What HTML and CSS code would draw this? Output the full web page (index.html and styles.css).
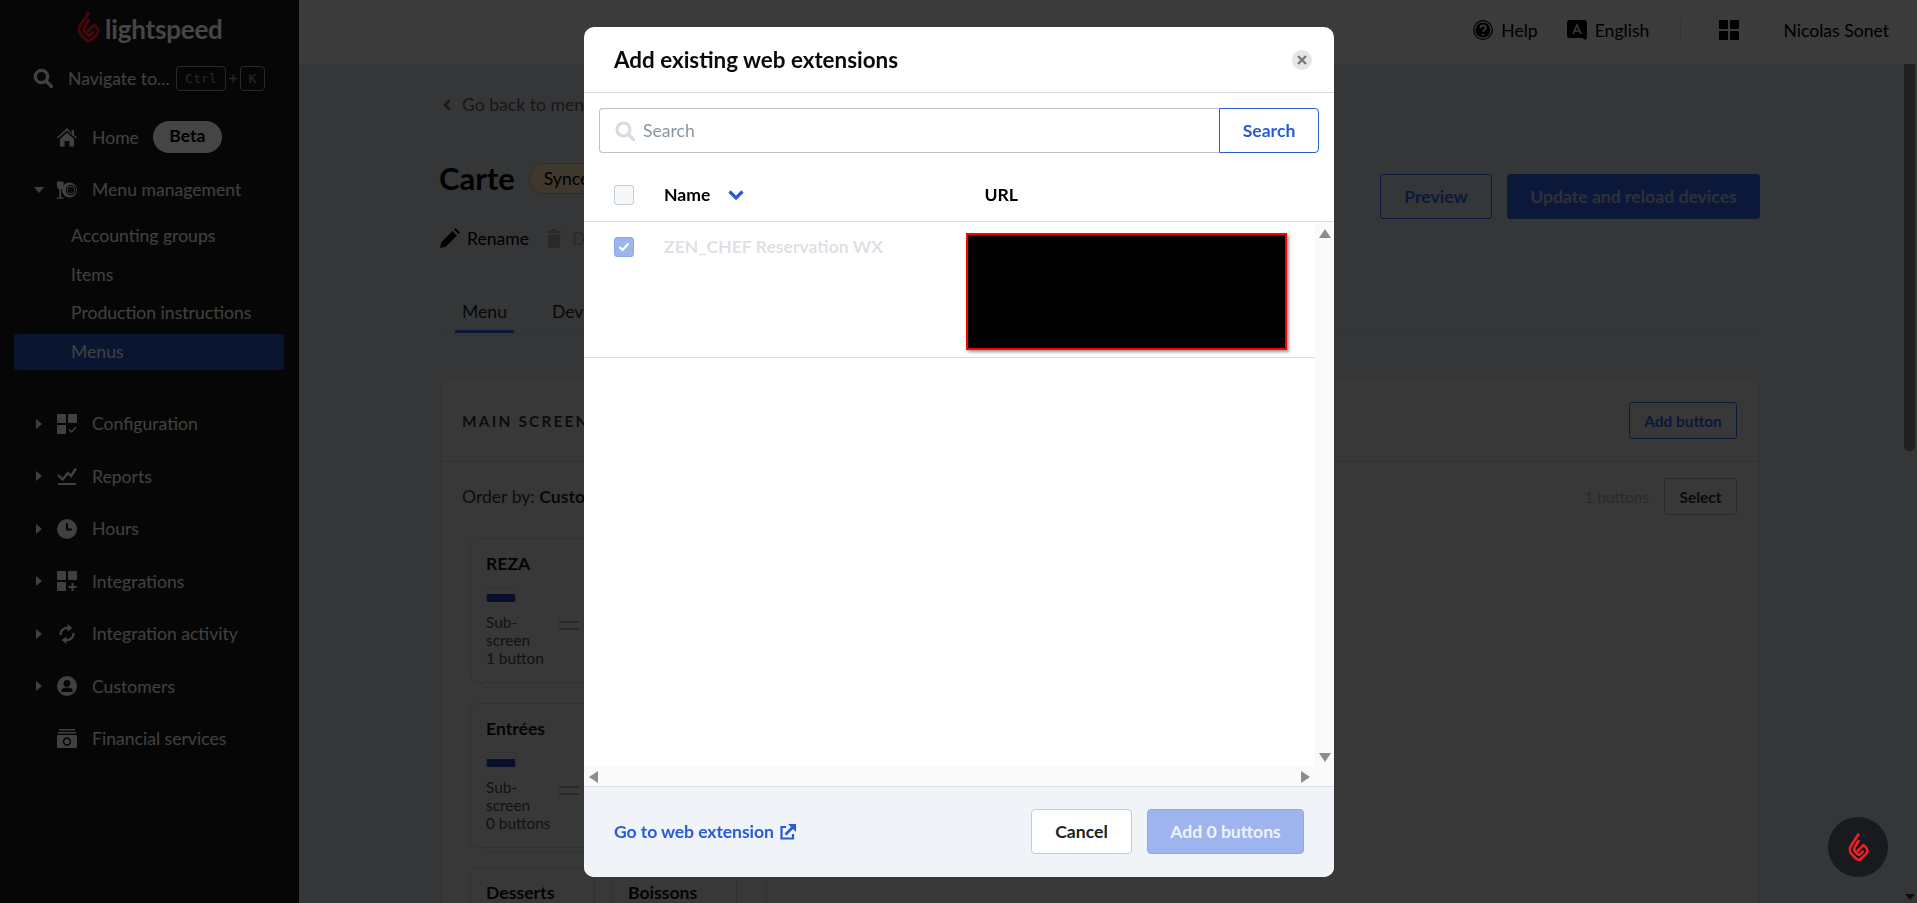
FILE: index.html
```html
<!DOCTYPE html>
<html lang="en">
<head>
    <meta charset="UTF-8">
    <title>Add existing web extensions</title>
    <link rel="stylesheet" href="styles.css">
</head>
<body>
    <svg class="defs" width="0" height="0">
        <symbol id="flame" viewBox="0 0 24 34">
            <path d="M12.500 1.500 L3.400 15.500 C1.200 19 2 23.400 5 26 L9.400 30.400 C11 32 13.400 32 15 30.400 L20.400 25.200 C22.800 22.800 22.600 19.600 20.200 17.200 L17.800 14.800 L10.400 22.200" fill="none" stroke="currentColor" stroke-width="3" stroke-linejoin="round"/>
            <path d="M12.600 9 L7.800 17 C6.600 19 7 21 8.400 22.600 L11.200 25.400 C12 26.200 12.800 26.200 13.600 25.400 L17.800 21.400" fill="none" stroke="currentColor" stroke-width="3" stroke-linejoin="round"/>
        </symbol>
    </svg>

    <div class="page">
        <aside class="sidebar">
            <div class="brand">
                <svg class="brand-mark"><use href="#flame"/></svg>
                <span class="brand-name">lightspeed</span>
            </div>
            <div class="navigate">
                <svg class="navigate-icon" viewBox="0 0 20 20"><circle cx="8.500" cy="8.500" r="6.200" fill="none" stroke="currentColor" stroke-width="3.200"/><path d="M13 13l5.500 5.500" stroke="currentColor" stroke-width="3.400" stroke-linecap="round"/></svg>
                <span class="navigate-label">Navigate to...</span>
                <kbd class="key key-ctrl">Ctrl</kbd>
                <span class="key-plus">+</span>
                <kbd class="key key-k">K</kbd>
            </div>

            <div class="nav-row">
                <span class="caret"></span>
                <svg class="nav-icon" viewBox="0 0 20 20"><path d="M10 1L0 10.500l1 1L10 3.400l9 8.100 1-1-3-2.800V3h-2.400v3.400z" fill="currentColor"/><path d="M3 12l7-6.400 7 6.400v7.500h-4.600V14H7.600v5.500H3z" fill="currentColor"/></svg>
                <span>Home</span>
                <span class="beta">Beta</span>
            </div>
            <div class="nav-row">
                <span class="caret caret-open"></span>
                <svg class="nav-icon" viewBox="0 0 20 20"><circle cx="12.500" cy="10" r="7.500" fill="currentColor"/><circle cx="14" cy="10" r="5.200" fill="#161616"/><circle cx="14" cy="10" r="3.700" fill="none" stroke="currentColor" stroke-width="0.900"/><path d="M0 1.500h6.500v5C6.500 8 5.200 9.200 4.100 9.400v8h2.400v1.300H0v-1.300h2.400v-8C1.300 9.200 0 8 0 6.500z" fill="currentColor"/></svg>
                <span>Menu management</span>
            </div>
            <a class="sub-row">Accounting groups</a>
            <a class="sub-row">Items</a>
            <a class="sub-row">Production instructions</a>
            <a class="sub-row sub-row-active">Menus</a>

            <div class="nav-group">
                <div class="nav-row">
                    <span class="caret caret-closed"></span>
                    <svg class="nav-icon" viewBox="0 0 20 20"><rect width="9" height="9" rx="1" fill="currentColor"/><rect x="11" width="9" height="9" rx="1" fill="currentColor"/><rect y="11" width="9" height="9" rx="1" fill="currentColor"/><path d="M12 15.500l2.400 2.400 4.600-5" fill="none" stroke="currentColor" stroke-width="1.500"/></svg>
                    <span>Configuration</span>
                </div>
                <div class="nav-row">
                    <span class="caret caret-closed"></span>
                    <svg class="nav-icon" viewBox="0 0 20 20"><path d="M1 9l4.500 4.500L11 7l3 3 5-7.500" fill="none" stroke="currentColor" stroke-width="2.400"/><rect x="1" y="17" width="18" height="2" fill="currentColor"/></svg>
                    <span>Reports</span>
                </div>
                <div class="nav-row">
                    <span class="caret caret-closed"></span>
                    <svg class="nav-icon" viewBox="0 0 20 20"><circle cx="10" cy="10" r="10" fill="currentColor"/><path d="M10 4v6.500h5" fill="none" stroke="#161616" stroke-width="2"/></svg>
                    <span>Hours</span>
                </div>
                <div class="nav-row">
                    <span class="caret caret-closed"></span>
                    <svg class="nav-icon" viewBox="0 0 20 20"><rect width="9" height="9" rx="1" fill="currentColor"/><rect x="11" width="9" height="9" rx="1" fill="currentColor"/><rect y="11" width="9" height="9" rx="1" fill="currentColor"/><path d="M15.500 12v8M11.500 16h8" stroke="currentColor" stroke-width="2"/></svg>
                    <span>Integrations</span>
                </div>
                <div class="nav-row">
                    <span class="caret caret-closed"></span>
                    <svg class="nav-icon" viewBox="0 0 20 20"><path d="M3.500 11A6.500 6.500 0 0 1 12 4.300" fill="none" stroke="currentColor" stroke-width="2.200"/><path d="M10.500 0l5 4-5 3.500z" fill="currentColor"/><path d="M16.500 9A6.500 6.500 0 0 1 8 15.700" fill="none" stroke="currentColor" stroke-width="2.200"/><path d="M9.500 20l-5-4 5-3.500z" fill="currentColor"/></svg>
                    <span>Integration activity</span>
                </div>
                <div class="nav-row">
                    <span class="caret caret-closed"></span>
                    <svg class="nav-icon" viewBox="0 0 20 20"><circle cx="10" cy="10" r="10" fill="currentColor"/><circle cx="10" cy="7.500" r="3.400" fill="#161616"/><path d="M4.500 16v-1.500c0-2 2-3 5.500-3s5.500 1 5.500 3V16z" fill="#161616"/></svg>
                    <span>Customers</span>
                </div>
                <div class="nav-row">
                    <span class="caret"></span>
                    <svg class="nav-icon" viewBox="0 0 20 20"><rect x="2" y="0" width="16" height="1.500" fill="currentColor"/><rect x="1" y="3" width="18" height="1.500" fill="currentColor"/><path d="M1 6h18a1 1 0 0 1 1 1v11a1 1 0 0 1-1 1H1a1 1 0 0 1-1-1V7a1 1 0 0 1 1-1z" fill="currentColor"/><circle cx="10" cy="12.500" r="3.400" fill="none" stroke="#161616" stroke-width="1.600"/></svg>
                    <span>Financial services</span>
                </div>
            </div>
        </aside>

        <div class="main">
            <header class="topbar">
                <div class="top-item">
                    <svg class="top-icon" viewBox="0 0 20 20"><circle cx="10" cy="10" r="9.300" fill="none" stroke="currentColor" stroke-width="1.200"/><circle cx="10" cy="10" r="7.600" fill="currentColor"/><path d="M7.400 8c0-3.400 5.200-3.400 5.200 0 0 2-2.600 2-2.600 3.800" fill="none" stroke="#d8d8d8" stroke-width="1.700"/><circle cx="10" cy="14.500" r="1.100" fill="#d8d8d8"/></svg>
                    <span>Help</span>
                </div>
                <div class="top-item top-item-lang">
                    <svg class="top-icon" viewBox="0 0 20 20"><path d="M3 0h14a3 3 0 0 1 3 3v15l-1.500 2-3.500-2H3a3 3 0 0 1-3-3V3a3 3 0 0 1 3-3z" fill="currentColor"/><path d="M6 14l4-9 4 9M7.400 11h5.200" fill="none" stroke="#d8d8d8" stroke-width="1.600"/></svg>
                    <span>English</span>
                </div>
                <span class="top-sep"></span>
                <svg class="top-icon top-grid" viewBox="0 0 20 20"><rect width="9" height="9" rx="1" fill="currentColor"/><rect x="11" width="9" height="9" rx="1" fill="currentColor"/><rect y="11" width="9" height="9" rx="1" fill="currentColor"/><rect x="11" y="11" width="9" height="9" rx="1" fill="currentColor"/></svg>
                <span class="top-user">Nicolas Sonet</span>
            </header>

            <div class="content-wrap">
                <div class="content">
                    <div class="back">
                        <svg class="back-icon" viewBox="0 0 8 12"><path d="M6.500 1.500L2 6l4.500 4.500" fill="none" stroke="currentColor" stroke-width="2.600"/></svg>
                        <span>Go back to menus</span>
                    </div>

                    <div class="title-row">
                        <div>
                            <div class="title-line">
                                <h1 class="title">Carte</h1>
                                <span class="sync">Synced</span>
                            </div>
                            <div class="actions">
                                <svg class="action-icon" viewBox="0 0 20 20"><path d="M0 20l1.500-6L12.500 3l4.500 4.500L6 18.500zM14 1.500L15.500 0 20 4.500 18.500 6z" fill="currentColor"/></svg>
                                <span class="action-label">Rename</span>
                                <svg class="action-icon action-icon-off" viewBox="0 0 14 20"><path d="M0 3h4.500V1h5v2H14v2H0zM1 6.500h12V20H1z" fill="currentColor"/></svg>
                                <span class="action-off">Delete</span>
                            </div>
                        </div>
                        <div class="title-buttons">
                            <button class="btn btn-outline btn-preview">Preview</button>
                            <button class="btn btn-primary">Update and reload devices</button>
                        </div>
                    </div>

                    <div class="tabs">
                        <span class="tab tab-active">Menu</span>
                        <span class="tab">Devices</span>
                    </div>

                    <section class="card">
                        <div class="card-head">
                            <span class="card-title">MAIN SCREEN</span>
                            <button class="btn-small btn-small-blue">Add button</button>
                        </div>
                        <div class="card-tools">
                            <span class="order">Order by: <b>Custom</b></span>
                            <span class="count">1 buttons</span>
                            <button class="btn-small btn-select">Select</button>
                        </div>
                        <div class="tiles">
                            <div class="tile tile-stack">
                                <div class="tile-name">REZA</div>
                                <div class="tile-swatch"></div>
                                <div class="tile-foot">
                                    <div class="tile-meta">Sub-<br>screen<br>1 button</div>
                                    <div class="tile-handle"></div>
                                </div>
                            </div>
                            <div class="tile-blank"></div>
                            <div class="tile tile-stack">
                                <div class="tile-name">Entrées</div>
                                <div class="tile-swatch"></div>
                                <div class="tile-foot">
                                    <div class="tile-meta">Sub-<br>screen<br>0 buttons</div>
                                    <div class="tile-handle"></div>
                                </div>
                            </div>
                            <div class="tile-blank"></div>
                            <div class="tile"><div class="tile-name">Desserts</div></div>
                            <div class="tile"><div class="tile-name">Boissons</div></div>
                            <div class="tile-last"></div>
                        </div>
                    </section>
                </div>
                <div class="page-scroll">
                    <div class="page-thumb"></div>
                    <span class="page-arrow"></span>
                </div>
            </div>
        </div>
    </div>

    <button class="chat">
        <svg class="chat-mark"><use href="#flame"/></svg>
    </button>

    <!-- dimmed layer + dialog -->
    <div class="overlay">
        <div class="modal">
            <div class="modal-head">
                <h2 class="modal-title">Add existing web extensions</h2>
                <span class="modal-close">
                    <svg viewBox="0 0 10 10" width="10" height="10"><path d="M1 1l8 8M9 1l-8 8" stroke="currentColor" stroke-width="2.400"/></svg>
                </span>
            </div>

            <div class="search">
                <div class="search-input">
                    <svg class="search-icon" viewBox="0 0 20 20"><circle cx="8.500" cy="8.500" r="6.500" fill="none" stroke="currentColor" stroke-width="3"/><path d="M13 13l5.500 5.500" stroke="currentColor" stroke-width="3.200" stroke-linecap="round"/></svg>
                    <span>Search</span>
                </div>
                <button class="search-btn">Search</button>
            </div>

            <div class="list-head">
                <span class="check"></span>
                <span class="col-name">Name</span>
                <svg class="sort" viewBox="0 0 16 10"><path d="M1.500 1.500L8 8l6.500-6.500" fill="none" stroke="currentColor" stroke-width="3.200"/></svg>
                <span class="col-url">URL</span>
            </div>

            <div class="list">
                <div class="list-scroll">
                    <div class="list-body">
                        <div class="list-row">
                            <span class="check check-on">
                                <svg viewBox="0 0 12 10" width="12" height="10"><path d="M1.500 5l3 3 6-6.500" fill="none" stroke="#fff" stroke-width="2.200"/></svg>
                            </span>
                            <span class="row-name">ZEN_CHEF Reservation WX</span>
                            <div class="redacted"></div>
                        </div>
                    </div>
                    <div class="vbar">
                        <span class="arrow arrow-up"></span>
                        <span class="arrow arrow-down"></span>
                    </div>
                </div>
                <div class="hbar">
                    <span class="arrow arrow-left"></span>
                    <span class="arrow arrow-right"></span>
                </div>
            </div>

            <div class="modal-foot">
                <a class="foot-link">Go to web extension
                    <svg class="foot-link-icon" viewBox="0 0 16 16"><path d="M6 3H1.500v11.500H13V10" fill="none" stroke="currentColor" stroke-width="2.200"/><path d="M5.500 10.500L12.500 3.500" stroke="currentColor" stroke-width="2.600"/><path d="M8 0h8v8z" fill="currentColor"/></svg>
                </a>
                <button class="btn-cancel">Cancel</button>
                <button class="btn-add">Add 0 buttons</button>
            </div>
        </div>
    </div>
</body>
</html>
```
FILE: styles.css
```css
*{
    box-sizing: border-box;
}
html, body{
    margin: 0;
    height: 100%;
    overflow: hidden;
}
body{
    font-family: "Lato", "Liberation Sans", sans-serif;
    font-size: 17.6px;
    color: #000;
}
button{
    font-family: inherit;
}
.defs{
    display: block;
    height: 0;
}

.page{
    display: flex;
    height: 903px;
}

/* sidebar */
.sidebar{
    width: 299px;
    flex-shrink: 0;
    background-color: #161616;
    color: #ececec;
}
.brand{
    height: 64px;
    display: flex;
    justify-content: flex-start;
    padding: 10px 0 0 77px;
}
.brand-mark{
    width: 23px;
    height: 34px;
    color: #ff2020;
}
.brand-name{
    margin-left: 5px;
    font-size: 26px;
    font-weight: 700;
    line-height: 38px;
    letter-spacing: -0.2px;
    color: #fff;
}
.navigate{
    height: 28px;
    display: flex;
    align-items: center;
    padding-left: 33px;
    margin-bottom: 19px;
}
.navigate-icon{
    width: 20px;
    height: 20px;
}
.navigate-label{
    margin-left: 15px;
    width: 108px;
}
.key{
    height: 25px;
    border: 1px solid #999;
    border-radius: 4px;
    font-family: "DejaVu Sans Mono", monospace;
    font-size: 13px;
    line-height: 23px;
    text-align: center;
    color: #999;
}
.key-ctrl{
    width: 50px;
}
.key-k{
    width: 25px;
}
.key-plus{
    width: 14px;
    text-align: center;
    color: #999;
}
.nav-row{
    height: 52.5px;
    display: flex;
    align-items: center;
    padding-left: 34px;
}
.caret{
    width: 10px;
    margin-right: 13px;
}
.caret-open{
    height: 0;
    border-left: 5px solid transparent;
    border-right: 5px solid transparent;
    border-top: 6px solid currentColor;
}
.caret-closed{
    width: 6px;
    height: 10px;
    margin-left: 2px;
    margin-right: 15px;
    border-top: 5px solid transparent;
    border-bottom: 5px solid transparent;
    border-left: 6px solid currentColor;
}
.nav-icon{
    width: 20px;
    height: 20px;
    margin-right: 15px;
    flex-shrink: 0;
}
.beta{
    margin-left: 14px;
    width: 69px;
    height: 32px;
    border-radius: 16px;
    background-color: #fff;
    color: #000;
    font-weight: 700;
    line-height: 30px;
    text-align: center;
}
.sub-row{
    display: block;
    height: 36px;
    margin: 2.4px 15px 0 14px;
    padding-left: 57px;
    line-height: 36px;
    border-radius: 3px;
}
.sub-row-active{
    background-color: #274fb4;
}
.nav-group{
    margin-top: 28px;
}

/* top bar */
.main{
    flex: 1;
    min-width: 0;
    display: flex;
    flex-direction: column;
    background-color: #c3c9cd;
}
.topbar{
    height: 64px;
    flex-shrink: 0;
    display: flex;
    align-items: center;
    justify-content: flex-end;
    padding: 0 28px 4px 0;
    background-color: #d8d8d8;
}
.top-item{
    display: flex;
    align-items: center;
    gap: 8px;
}
.top-item-lang{
    margin-left: 29px;
}
.top-icon{
    width: 20px;
    height: 20px;
}
.top-sep{
    width: 1px;
    height: 20px;
    margin: 0 38px 0 31px;
    background-color: #bdbdbd;
}
.top-user{
    margin-left: 44px;
}

/* page content */
.content-wrap{
    flex: 1;
    min-height: 0;
    display: flex;
    overflow: hidden;
}
.content{
    flex: 1;
    min-width: 0;
    padding: 28px 144px 0 141px;
}
.back{
    display: flex;
    align-items: center;
    height: 25px;
    margin-bottom: 1px;
    color: #555;
}
.back-icon{
    width: 8px;
    height: 12px;
    margin: 0 11px 0 3px;
}
.title-row{
    display: flex;
    justify-content: space-between;
    margin-top: 43px;
}
.title-line{
    display: flex;
    align-items: center;
    height: 36px;
}
.title{
    margin: 0 0 0 -1px;
    font-size: 31px;
    font-weight: 700;
}
.sync{
    margin-left: 14px;
    padding: 0 14px;
    height: 31px;
    border: 1px solid #c9a063;
    border-radius: 16px;
    background-color: #e8cfa6;
    line-height: 29px;
}
.actions{
    display: flex;
    align-items: center;
    height: 22px;
    margin-top: 31px;
}
.action-icon{
    width: 20px;
    height: 20px;
    margin-right: 7px;
}
.action-icon-off{
    width: 14px;
    margin: 0 11px 0 18px;
    color: #999;
}
.action-off{
    color: #999;
}
.title-buttons{
    display: flex;
    gap: 15px;
    margin-top: 14px;
}
.btn{
    height: 45px;
    border-radius: 3px;
    font-size: 17.6px;
    font-weight: 700;
}
.btn-outline{
    width: 112px;
    background-color: transparent;
    border: 1px solid #2a5bd7;
    color: #2a5bd7;
}
.btn-primary{
    width: 253px;
    background-color: #2a5bd7;
    border: 1px solid #2a5bd7;
    color: #aab3c7;
}
.tabs{
    display: flex;
    margin-top: 39px;
    height: 46px;
    border-bottom: 1px solid #b5bcc0;
}
.tab{
    padding: 9px 7px 0;
    margin-left: 15px;
    height: 45px;
    line-height: 30px;
    color: #222;
}
.tab-active{
    border-bottom: 3px solid #2a5bd7;
    margin-right: 16px;
}

.card{
    margin-top: 45px;
    height: 600px;
    background-color: #cfcfcf;
    border: 1px solid #bbb;
    border-radius: 8px;
}
.card-head{
    height: 82px;
    display: flex;
    align-items: center;
    justify-content: space-between;
    padding: 0 22px 0 21px;
    border-bottom: 1px solid #b9b9b9;
}
.card-title{
    font-size: 15.4px;
    font-weight: 700;
    letter-spacing: 2.2px;
    color: #333;
}
.btn-small{
    height: 37px;
    padding: 0 15px;
    background-color: transparent;
    border: 1px solid #999;
    border-radius: 3px;
    font-size: 15.4px;
    font-weight: 700;
    color: #222;
}
.btn-small-blue{
    width: 108px;
    padding: 0;
    border-color: #2a5bd7;
    color: #2a5bd7;
}
.btn-select{
    width: 73px;
    padding: 0;
}
.card-tools{
    display: flex;
    align-items: center;
    height: 37px;
    margin-top: 16px;
    padding: 0 22px 0 21px;
}
.order{
    flex: 1;
    color: #333;
}
.order b{
    color: #222;
}
.count{
    margin-right: 15px;
    font-size: 15.4px;
    color: #999;
}
.tiles{
    display: grid;
    grid-template-columns: 125px 125px 13px;
    grid-auto-rows: 145px;
    column-gap: 17px;
    row-gap: 19.5px;
    margin: 23px 0 0 29px;
}
.tile{
    position: relative;
    border: 1px solid #b5b5b5;
    border-radius: 8px;
    padding: 0 15px;
}
.tile-stack::after{
    content: "";
    position: absolute;
    left: 9px;
    right: 9px;
    bottom: -6px;
    height: 5px;
    border: 1px solid #b5b5b5;
    border-top: 0;
    border-radius: 0 0 6px 6px;
}
.tile-blank{
    grid-column: 2 / 4;
}
.tile-last{
    margin-left: -17px;
    border-right: 1px solid #b5b5b5;
}
.tile-name{
    font-size: 17.6px;
    font-weight: 700;
    line-height: 22px;
    margin-top: 14px;
    color: #111;
}
.tile-swatch{
    width: 30px;
    height: 15px;
    margin-top: 12px;
    border-radius: 3px;
    border: 1px solid #bbb;
    border-bottom: 8px solid #27389a;
}
.tile-foot{
    display: flex;
    justify-content: space-between;
    margin-top: 11px;
}
.tile-meta{
    font-size: 15.4px;
    line-height: 18px;
    color: #444;
}
.tile-handle{
    width: 20px;
    height: 9px;
    margin-top: 8px;
    border-top: 2px solid #999;
    border-bottom: 2px solid #999;
}

.page-scroll{
    position: relative;
    width: 13px;
    flex-shrink: 0;
    background-color: #c0c6ca;
}
.page-thumb{
    width: 11px;
    height: 387px;
    border-radius: 0 0 5px 5px;
    background-color: #777;
}
.page-arrow{
    position: absolute;
    left: 1px;
    bottom: 3px;
    border-left: 5px solid transparent;
    border-right: 5px solid transparent;
    border-top: 6px solid #333;
}

/* floating chat button */
.chat{
    position: fixed;
    left: 1828px;
    top: 817px;
    width: 60px;
    height: 60px;
    padding: 0;
    border: 0;
    border-radius: 50%;
    background-color: #181a1f;
    color: #ed2024;
    display: flex;
    align-items: center;
    justify-content: center;
    z-index: 20;
}
.chat-mark{
    width: 21px;
    height: 30px;
}

/* dialog */
.overlay{
    position: fixed;
    inset: 0;
    padding: 27px 0 0 584px;
    background-color: rgba(0, 0, 0, 0.73);
    z-index: 10;
}
.modal{
    width: 750px;
    height: 850px;
    display: flex;
    flex-direction: column;
    background-color: #fff;
    border-radius: 10px;
    overflow: hidden;
}
.modal-head{
    height: 66px;
    flex-shrink: 0;
    display: flex;
    align-items: center;
    justify-content: space-between;
    padding: 0 22px 0 30px;
    border-bottom: 1px solid #d8dde3;
}
.modal-title{
    margin: 0;
    font-size: 22.4px;
    font-weight: 700;
    color: #0a0a0a;
}
.modal-close{
    width: 20px;
    height: 20px;
    border-radius: 50%;
    background-color: #e6e6e6;
    color: #777;
    display: flex;
    align-items: center;
    justify-content: center;
}
.search{
    display: flex;
    height: 45px;
    flex-shrink: 0;
    margin: 15px 15px 0;
}
.search-input{
    flex: 1;
    display: flex;
    align-items: center;
    padding-left: 15px;
    border: 1px solid #b9c2cd;
    border-right: 0;
    border-radius: 4px 0 0 4px;
    color: #8a95a1;
}
.search-icon{
    width: 20px;
    height: 20px;
    margin-right: 8px;
    color: #d5dbe1;
}
.search-btn{
    width: 100px;
    background-color: #fff;
    border: 1px solid #2a5bd7;
    border-radius: 0 4px 4px 0;
    color: #2a5bd7;
    font-size: 17.6px;
    font-weight: 700;
}
.list-head{
    height: 69px;
    flex-shrink: 0;
    display: flex;
    align-items: center;
    padding: 15px 0 0 30px;
    font-weight: 700;
    border-bottom: 1px solid #d8dde3;
}
.check{
    width: 20px;
    height: 20px;
    flex-shrink: 0;
    border: 1px solid #c3cad3;
    border-radius: 3px;
    background-color: #f6f7f9;
    display: flex;
    align-items: center;
    justify-content: center;
}
.check-on{
    margin-top: 4px;
    background-color: #9db4ef;
    border-color: #8ea8ea;
}
.col-name{
    margin-left: 30px;
}
.sort{
    width: 16px;
    height: 10px;
    margin-left: 18px;
    color: #2a5bd7;
}
.col-url{
    margin-left: 240px;
}
.list{
    flex: 1;
    min-height: 0;
    display: flex;
    flex-direction: column;
}
.list-scroll{
    flex: 1;
    min-height: 0;
    display: flex;
}
.list-body{
    flex: 1;
}
.list-row{
    height: 136px;
    display: flex;
    padding: 11px 0 0 30px;
    border-bottom: 1px solid #d8dde3;
}
.row-name{
    margin: 3px 0 0 30px;
    width: 302px;
    height: 24px;
    font-weight: 700;
    color: #dde1e6;
}
.redacted{
    width: 321px;
    height: 117px;
    background-color: #000;
    border: 2px solid #f00;
    box-shadow: 2px 2px 3px #999;
}
.vbar{
    position: relative;
    width: 19px;
    background-color: #fafafa;
}
.hbar{
    position: relative;
    height: 19px;
    flex-shrink: 0;
    background-color: #fafafa;
}
.arrow{
    position: absolute;
    width: 0;
    height: 0;
}
.arrow-up{
    top: 7px;
    left: 4px;
    border-left: 6px solid transparent;
    border-right: 6px solid transparent;
    border-bottom: 9px solid #8c8c8c;
}
.arrow-down{
    bottom: 5px;
    left: 4px;
    border-left: 6px solid transparent;
    border-right: 6px solid transparent;
    border-top: 9px solid #8c8c8c;
}
.arrow-left{
    top: 4px;
    left: 5px;
    border-top: 6px solid transparent;
    border-bottom: 6px solid transparent;
    border-right: 9px solid #8c8c8c;
}
.arrow-right{
    top: 4px;
    right: 24px;
    border-top: 6px solid transparent;
    border-bottom: 6px solid transparent;
    border-left: 9px solid #8c8c8c;
}
.modal-foot{
    height: 91px;
    flex-shrink: 0;
    display: flex;
    align-items: center;
    padding: 0 30px 1px;
    background-color: #f0f3f7;
    border-top: 1px solid #d8dde3;
}
.foot-link{
    flex: 1;
    display: flex;
    align-items: center;
    gap: 6px;
    letter-spacing: -0.1px;
    color: #2a5bd7;
    font-weight: 700;
}
.foot-link-icon{
    width: 16px;
    height: 16px;
}
.btn-cancel, .btn-add{
    height: 45px;
    border-radius: 4px;
    font-size: 17.6px;
    font-weight: 700;
}
.btn-cancel{
    width: 101px;
    background-color: #fff;
    border: 1px solid #c3cad3;
    color: #1b1f24;
}
.btn-add{
    width: 157px;
    margin-left: 15px;
    background-color: #9db4ef;
    border: 1px solid #8ea8ea;
    color: #eef2fb;
}
```
